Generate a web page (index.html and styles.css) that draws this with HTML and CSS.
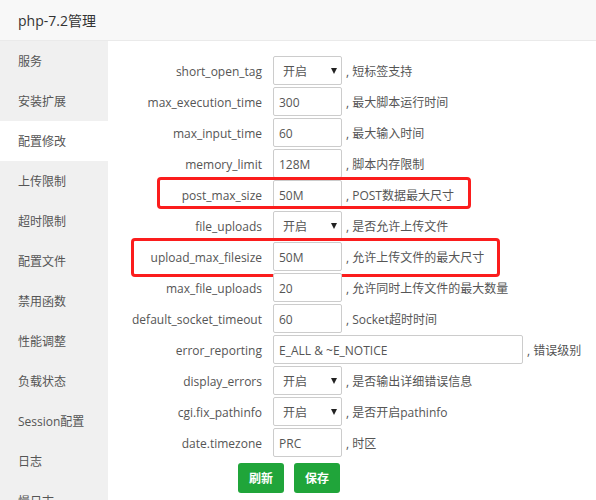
FILE: index.html
```html
<!DOCTYPE html>
<html lang="zh-CN">
<head>
<meta charset="utf-8">
<title>php-7.2管理</title>
<link rel="stylesheet" href="styles.css">
</head>
<body>
<div class="header">php-7.2管理</div>
<div class="main">
  <ul class="sidebar">
    <li>服务</li>
    <li>安装扩展</li>
    <li class="active">配置修改</li>
    <li>上传限制</li>
    <li>超时限制</li>
    <li>配置文件</li>
    <li>禁用函数</li>
    <li>性能调整</li>
    <li>负载状态</li>
    <li>Session配置</li>
    <li>日志</li>
    <li>慢日志</li>
    <li>phpinfo</li>
  </ul>
  <div class="content">
    <div class="row"><span class="label">short_open_tag</span><span class="select-wrap"><select class="field"><option>开启</option><option>关闭</option></select><i class="caret"></i></span><span class="note">, 短标签支持</span></div>
    <div class="row"><span class="label">max_execution_time</span><input class="field" value="300"><span class="note">, 最大脚本运行时间</span></div>
    <div class="row"><span class="label">max_input_time</span><input class="field" value="60"><span class="note">, 最大输入时间</span></div>
    <div class="row"><span class="label">memory_limit</span><input class="field" value="128M"><span class="note">, 脚本内存限制</span></div>
    <div class="row"><span class="label">post_max_size</span><input class="field" value="50M"><span class="note">, POST数据最大尺寸</span><span class="mark mark-post"></span></div>
    <div class="row"><span class="label">file_uploads</span><span class="select-wrap"><select class="field"><option>开启</option><option>关闭</option></select><i class="caret"></i></span><span class="note">, 是否允许上传文件</span></div>
    <div class="row"><span class="label">upload_max_filesize</span><input class="field" value="50M"><span class="note">, 允许上传文件的最大尺寸</span><span class="mark mark-upload"></span></div>
    <div class="row"><span class="label">max_file_uploads</span><input class="field" value="20"><span class="note">, 允许同时上传文件的最大数量</span></div>
    <div class="row"><span class="label">default_socket_timeout</span><input class="field" value="60"><span class="note">, Socket超时时间</span></div>
    <div class="row"><span class="label">error_reporting</span><input class="field wide" value="E_ALL &amp; ~E_NOTICE"><span class="note">, 错误级别</span></div>
    <div class="row"><span class="label">display_errors</span><span class="select-wrap"><select class="field"><option>开启</option><option>关闭</option></select><i class="caret"></i></span><span class="note">, 是否输出详细错误信息</span></div>
    <div class="row"><span class="label">cgi.fix_pathinfo</span><span class="select-wrap"><select class="field"><option>开启</option><option>关闭</option></select><i class="caret"></i></span><span class="note">, 是否开启pathinfo</span></div>
    <div class="row"><span class="label">date.timezone</span><input class="field" value="PRC"><span class="note">, 时区</span></div>
    <div class="actions">
      <button class="btn">刷新</button>
      <button class="btn">保存</button>
    </div>
  </div>
</div>
</body>
</html>
```
FILE: styles.css
```css
html, body {
  margin: 0;
  padding: 0;
  height: 100%;
  overflow: hidden;
  background: #fff;
  font-family: "Open Sans", "Noto Sans CJK SC", sans-serif;
  font-size: 12px;
  color: #555;
}

.header {
  box-sizing: border-box;
  height: 41px;
  line-height: 40px;
  padding-left: 18px;
  padding-top: 1px;
  background: #f8f8f8;
  border-bottom: 1px solid #eaeaea;
  font-size: 14px;
  color: #333;
}

.main {
  display: flex;
  height: calc(100% - 41px);
}

.sidebar {
  list-style: none;
  margin: 0;
  padding: 0;
  width: 108px;
  flex: none;
  background: #f0f0f0;
}

.sidebar li {
  box-sizing: border-box;
  height: 40px;
  line-height: 39px;
  padding-top: 1px;
  padding-left: 18px;
  color: #555;
  font-size: 12px;
}

.sidebar li.active {
  background: #fff;
}

.content {
  flex: 1;
  padding-top: 15px;
}

.row {
  position: relative;
  display: flex;
  align-items: center;
  height: 29px;
  margin-bottom: 2px;
}

.label {
  width: 154px;
  flex: none;
  text-align: right;
  margin-right: 11px;
  padding-top: 1px;
  color: #555;
}

.field {
  box-sizing: border-box;
  width: 69px;
  height: 29px;
  border: 1px solid #ccc;
  border-radius: 2px;
  padding: 1px 0 0 5px;
  margin: 0;
  font-family: inherit;
  font-size: 12px;
  color: #555;
  background: #fff;
  outline: none;
}

.field.wide {
  width: 250px;
}

.select-wrap {
  position: relative;
  display: block;
  flex: none;
}

.select-wrap select {
  appearance: none;
  -webkit-appearance: none;
  padding-left: 9px;
  display: block;
}

.caret {
  position: absolute;
  right: 5px;
  top: 12px;
  width: 0;
  height: 0;
  border-left: 3.5px solid transparent;
  border-right: 3.5px solid transparent;
  border-top: 6px solid #222;
  pointer-events: none;
}

.note {
  margin-left: 4px;
  padding-top: 1px;
  white-space: nowrap;
}

.mark {
  position: absolute;
  box-sizing: border-box;
  border: 3px solid #fb1d1d;
  border-radius: 4px;
  pointer-events: none;
}

.mark-post {
  left: 49px;
  top: -3px;
  width: 314px;
  height: 32px;
}

.mark-upload {
  left: 23px;
  top: -4px;
  width: 369px;
  height: 39px;
}

.actions {
  display: flex;
  gap: 10px;
  padding-left: 130px;
  margin-top: 6px;
}

.btn {
  width: 46px;
  height: 30px;
  border: none;
  border-radius: 3px;
  background: #20a53a;
  color: #fff;
  font-family: inherit;
  font-size: 12px;
  font-weight: bold;
  padding: 0;
}
```
